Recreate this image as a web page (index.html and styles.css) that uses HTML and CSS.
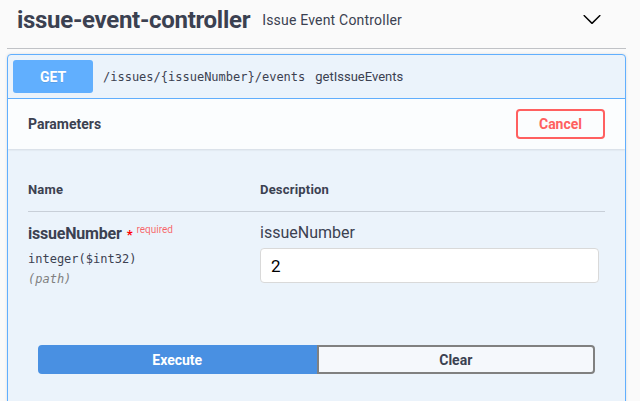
FILE: index.html
```html
<!DOCTYPE html>
<html lang="en">
<head>
<meta charset="utf-8">
<title>issue-event-controller</title>
<link rel="stylesheet" href="styles.css">
</head>
<body>
<div class="page">
  <div class="tag">
    <h3 class="tag-title">issue-event-controller</h3>
    <span class="tag-desc">Issue Event Controller</span>
    <svg class="arrow" width="20" height="20" viewBox="0 0 20 20" aria-hidden="true"><path d="M17.418 6.109c.272-.268.709-.268.979 0s.271.701 0 .969l-7.908 7.83c-.27.268-.707.268-.979 0l-7.908-7.83c-.27-.268-.27-.701 0-.969.271-.268.709-.268.979 0L10 13.25l7.418-7.141z"/></svg>
  </div>
  <div class="opblock">
    <div class="summary">
      <span class="method">GET</span>
      <span class="path">/issues/{issueNumber}/events</span>
      <span class="op-desc">getIssueEvents</span>
    </div>
    <div class="section-header">
      <h4 class="section-title">Parameters</h4>
      <button class="btn-cancel">Cancel</button>
    </div>
    <div class="table-container">
      <div class="params">
        <div class="th">Name</div>
        <div class="th">Description</div>
        <div class="td td-name">
          <div class="p-name">issueNumber<span class="req-star">*</span><span class="req-label">required</span></div>
          <div class="p-type">integer<span class="p-format">($int32)</span></div>
          <div class="p-in">(path)</div>
        </div>
        <div class="td td-desc">
          <div class="p-desc">issueNumber</div>
          <input class="p-input" type="text" value="2">
        </div>
      </div>
    </div>
    <div class="execute-wrapper">
      <div class="btn-group">
        <button class="btn-exec">Execute</button>
        <button class="btn-clear">Clear</button>
      </div>
    </div>
  </div>
</div>
</body>
</html>
```
FILE: styles.css
```css
* { box-sizing: border-box; }
html, body { margin: 0; padding: 0; }
body {
  background: #fafafa;
  font-family: Roboto, "Liberation Sans", sans-serif;
  color: #3b4151;
}
.page {
  padding: 0 14px 0 7px;
}
.tag {
  display: flex;
  align-items: center;
  padding: 6px 24px 13px 10px;
  border-bottom: 1px solid rgba(59, 65, 81, 0.3);
  margin-bottom: 5px;
}
.tag-title {
  margin: 0;
  font-size: 24px;
  font-weight: 700;
  line-height: 29px;
  letter-spacing: -0.3px;
  color: #3b4151;
}
.tag-desc {
  flex: 1;
  font-size: 14px;
  line-height: 17px;
  padding: 0 10px 0 12px;
  letter-spacing: 0.2px;
}
.arrow {
  display: block;
  margin-top: -3px;
  fill: #000;
}
.opblock {
  border: 1px solid #61affe;
  border-radius: 4px;
  background: #ebf3fb;
  box-shadow: 0 0 3px rgba(0, 0, 0, 0.12);
  overflow: hidden;
}
.summary {
  display: flex;
  align-items: center;
  padding: 5px;
  border-bottom: 1px solid #61affe;
}
.method {
  width: 80px;
  height: 33px;
  display: flex;
  align-items: center;
  justify-content: center;
  background: #61affe;
  color: #fff;
  border-radius: 3px;
  font-weight: 700;
  font-size: 14px;
  text-shadow: 0 1px 0 rgba(0, 0, 0, 0.1);
}
.path {
  font-family: "DejaVu Sans Mono", "Liberation Mono", monospace;
  font-size: 12px;
  padding: 0 10px;
  color: #3b4151;
}
.op-desc {
  font-size: 13px;
  color: #3b4151;
}
.section-header {
  display: flex;
  align-items: center;
  justify-content: space-between;
  height: 50px;
  padding: 8px 20px;
  background: rgba(255, 255, 255, 0.8);
  box-shadow: 0 1px 2px rgba(0, 0, 0, 0.1);
}
.section-title {
  margin: 0;
  font-size: 14px;
  font-weight: 700;
}
.btn-cancel {
  width: 89px;
  height: 30px;
  border: 2px solid #ff6060;
  border-radius: 4px;
  background: transparent;
  color: #ff6060;
  font-family: Roboto, "Liberation Sans", sans-serif;
  font-size: 14px;
  font-weight: 700;
  padding: 0;
}
.table-container {
  padding: 20px;
}
.params {
  display: grid;
  grid-template-columns: 232px 1fr;
}
.th {
  font-size: 13px;
  font-weight: 700;
  line-height: 17px;
  padding: 12px 0 13px;
  border-bottom: 1px solid rgba(59, 65, 81, 0.2);
  letter-spacing: 0.2px;
}
.td {
  padding: 10px 0;
}
.p-name {
  font-size: 16px;
  font-weight: 700;
  line-height: 23px;
  height: 23px;
  letter-spacing: -0.2px;
}
.req-star {
  color: #f00;
  font-size: 13px;
  line-height: 0;
  padding: 0 4px 0 5px;
}
.req-label {
  color: rgba(255, 0, 0, 0.6);
  font-size: 10px;
  font-weight: 400;
  line-height: 0;
  letter-spacing: 0;
  vertical-align: 6px;
}
.p-type {
  font-family: "DejaVu Sans Mono", "Liberation Mono", monospace;
  font-size: 12px;
  line-height: 15px;
  font-weight: 400;
  padding: 7px 0 5px;
}
.p-in {
  font-family: "DejaVu Sans Mono", "Liberation Mono", monospace;
  font-size: 12px;
  line-height: 15px;
  font-style: italic;
  color: #808080;
}
.p-desc {
  font-size: 16px;
  line-height: 22px;
}
.p-input {
  display: block;
  margin-top: 4px;
  width: 339px;
  height: 35px;
  border: 1px solid #d9d9d9;
  border-radius: 4px;
  background: #fff;
  padding: 8px 10px;
  font-family: Roboto, "Liberation Sans", sans-serif;
  font-size: 17px;
  color: #000;
}
.execute-wrapper {
  padding: 0 20px;
}
.btn-group {
  display: flex;
  padding: 28px 10px 30px;
}
.btn-exec,
.btn-clear {
  flex: 1;
  height: 29px;
  font-family: Roboto, "Liberation Sans", sans-serif;
  font-size: 14px;
  font-weight: 700;
  padding: 0;
}
.btn-exec {
  background: #4990e2;
  color: #fff;
  border: 2px solid #4990e2;
  border-radius: 4px 0 0 4px;
}
.btn-clear {
  background: #f5f8fc;
  color: #3b4151;
  border: 2px solid #808080;
  border-radius: 0 4px 4px 0;
}
```
